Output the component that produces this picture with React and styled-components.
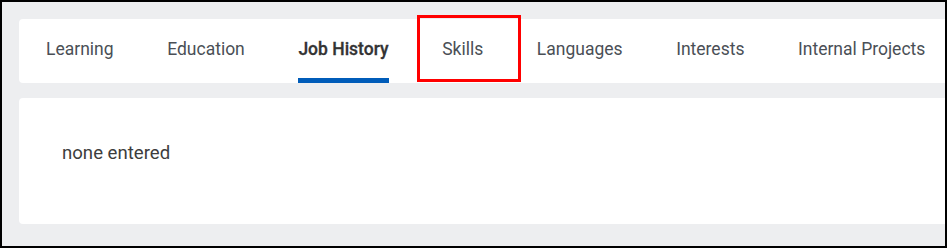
import React from "react";
import styled, { createGlobalStyle } from "styled-components";

const GlobalStyle = createGlobalStyle`
  html, body {
    margin: 0;
    padding: 0;
    background: #ffffff;
  }
  body {
    font-family: Roboto, "Liberation Sans", Arial, sans-serif;
  }
`;

const Frame = styled.div`
  position: relative;
  box-sizing: border-box;
  width: 947px;
  height: 248px;
  border: 2px solid #000;
  background-color: #edeef0;
  padding: 17px 0 0 17px;
  overflow: hidden;
`;

const TabCard = styled.div`
  display: flex;
  align-items: stretch;
  gap: 53.6px;
  height: 64px;
  padding-left: 27px;
  background-color: #fff;
  border-radius: 4px 0 0 4px;
  box-sizing: border-box;
`;

const Tab = styled.div`
  box-sizing: border-box;
  height: 64px;
  padding-top: 19.5px;
  font-size: 17.5px;
  white-space: nowrap;
  color: ${(p) => (p.$active ? "#333333" : "#4a4f56")};
  font-weight: ${(p) => (p.$active ? 500 : 400)};
  -webkit-text-stroke: ${(p) => (p.$active ? "0.3px #333333" : "0")};
  border-bottom: 5px solid ${(p) => (p.$active ? "#005cb9" : "transparent")};
`;

const ContentCard = styled.div`
  box-sizing: border-box;
  height: 126px;
  margin-top: 15px;
  padding: 44px 0 0 43px;
  background-color: #fff;
  border-radius: 4px 0 0 4px;
  font-size: 18.6px;
  color: #3d3d3d;
`;

const Highlight = styled.div`
  position: absolute;
  left: 415px;
  top: 13px;
  width: 104px;
  height: 67px;
  box-sizing: border-box;
  border: 3px solid #ff0000;
  pointer-events: none;
`;

const tabs = [
  "Learning",
  "Education",
  "Job History",
  "Skills",
  "Languages",
  "Interests",
  "Internal Projects",
];

function App() {
  return (
    <>
      <GlobalStyle />
      <Frame>
        <TabCard>
          {tabs.map((t) => (
            <Tab key={t} $active={t === "Job History"}>
              {t}
            </Tab>
          ))}
        </TabCard>
        <ContentCard>none entered</ContentCard>
        <Highlight />
      </Frame>
    </>
  );
}

export default App;
